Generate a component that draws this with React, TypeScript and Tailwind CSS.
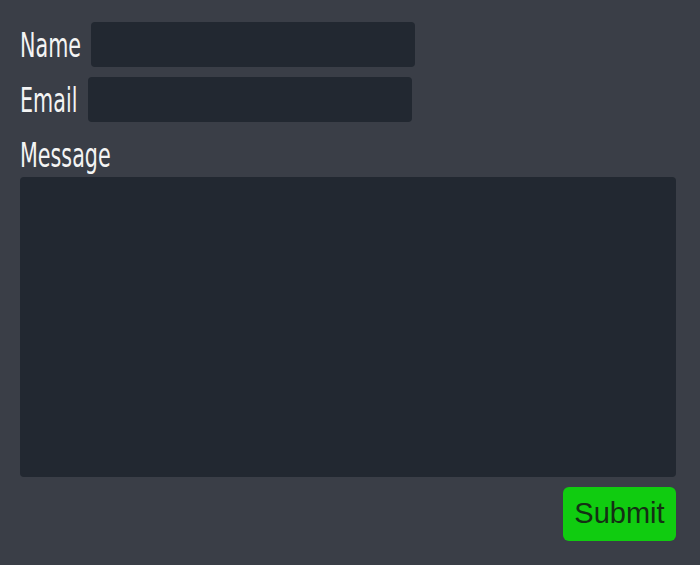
const labelFont = "font-['Liberation_Sans_Narrow','DejaVu_Sans_Condensed',sans-serif] text-[23px] leading-none";

export default function App() {
  return (
    <main className="min-h-screen w-full bg-[#3a3e47] px-5 pt-[22px] text-[#f4f4f4]">
      <form className="flex w-[656px] flex-col" onSubmit={(e) => e.preventDefault()}>
        <label className={`flex items-center gap-[10px] ${labelFont}`}>
          <span className="inline-block translate-y-[2px] scale-y-[1.45]">Name</span>
          <input type="text" className="h-[45px] w-[324px] rounded bg-[#222831] outline-none" />
        </label>
        <label className={`mt-[10px] flex items-center gap-[11px] ${labelFont}`}>
          <span className="inline-block translate-y-[2px] scale-y-[1.45]">Email</span>
          <input type="email" className="h-[45px] w-[324px] rounded bg-[#222831] outline-none" />
        </label>
        <label className={`mt-[10px] flex flex-col ${labelFont}`}>
          <span className="flex h-[45px] items-center">
            <span className="inline-block translate-y-[2px] scale-y-[1.45]">Message</span>
          </span>
          <textarea className="h-[300px] w-full resize-none rounded bg-[#222831] outline-none" />
        </label>
        <div className="mt-[10px] flex justify-end">
          <button
            type="submit"
            className="h-[54px] w-[113px] rounded-md bg-[#10cc10] font-['Liberation_Sans',Arial,sans-serif] text-[29px] text-[#143014]"
          >
            Submit
          </button>
        </div>
      </form>
    </main>
  );
}
